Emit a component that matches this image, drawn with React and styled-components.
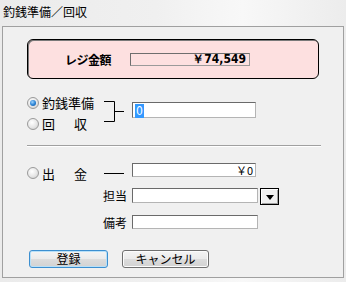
import styled, { createGlobalStyle } from "styled-components";

const GlobalStyle = createGlobalStyle`
  html, body {
    margin: 0;
    padding: 0;
  }
  body {
    width: 346px;
    height: 282px;
    overflow: hidden;
    background: #f0f0f0;
    font-family: "Noto Sans CJK JP", "DejaVu Sans", sans-serif;
    color: #000;
  }
`;

const Window = styled.div`
  width: 346px;
  height: 282px;
  display: flex;
  flex-direction: column;
  background: linear-gradient(90deg, #ebebeb 0%, #f0f0f0 45%, #f8f8f8 70%, #ececec 100%);
`;

const Title = styled.div`
  height: 26px;
  padding-left: 3px;
  font-size: 12px;
  line-height: 24px;
`;

const Panel = styled.div`
  box-sizing: border-box;
  width: 342px;
  height: 252px;
  margin-left: 2px;
  border: 1px solid #a0a0a0;
  background: #f0f0f0;
  display: flex;
  flex-direction: column;
`;

const PinkBox = styled.div`
  box-sizing: border-box;
  width: 292px;
  height: 40px;
  margin: 12px 0 0 24px;
  border: 1px solid #000;
  border-radius: 6px;
  box-shadow: inset 1px 1px 0 #7a7a7a;
  background: #fde0e0;
  display: flex;
  align-items: center;
  padding-left: 37px;
`;

const BoldLabel = styled.span`
  font-size: 12px;
  font-weight: bold;
  letter-spacing: -0.5px;
`;

const Display = styled.div`
  box-sizing: border-box;
  width: 120px;
  height: 13px;
  margin-left: 19px;
  border: 1px solid #9a9a9a;
  border-top-color: #6e6e6e;
  border-left-color: #6e6e6e;
  padding-right: 3px;
  text-align: right;
  font-family: "DejaVu Sans Condensed", "DejaVu Sans", sans-serif;
  font-stretch: condensed;
  font-weight: bold;
  font-size: 12px;
  line-height: 11px;
`;

const ChoiceSection = styled.div`
  display: flex;
  align-items: flex-start;
  margin: 13px 0 0 24px;
`;

const RadioList = styled.div`
  width: 77px;
  display: flex;
  flex-direction: column;
`;

const RadioRow = styled.label`
  height: 21px;
  display: flex;
  align-items: center;
  gap: 3px;
  font-size: 13px;
`;

const Radio = styled.span`
  box-sizing: border-box;
  flex-shrink: 0;
  width: 12px;
  height: 12px;
  border-radius: 50%;
  border: 1px solid #9a9a9a;
  background: radial-gradient(circle at 40% 35%, #ffffff 0%, #e6e6e6 55%, #c9c9c9 100%);
  display: flex;
  align-items: center;
  justify-content: center;
  &::after {
    content: "";
    display: ${(p) => (p.$checked ? "block" : "none")};
    width: 6px;
    height: 6px;
    border-radius: 50%;
    background: radial-gradient(circle at 40% 35%, #9fd4ff 0%, #2f86d6 50%, #0b4f9c 100%);
  }
`;

const Spaced = styled.span`
  letter-spacing: 3px;
  white-space: nowrap;
`;

const Bracket = styled.svg`
  display: block;
  flex-shrink: 0;
`;

const Field = styled.div`
  box-sizing: border-box;
  flex-shrink: 0;
  width: ${(p) => p.$w || 124}px;
  height: ${(p) => p.$h || 15}px;
  margin-top: ${(p) => p.$top || 0}px;
  margin-left: ${(p) => p.$left || 0}px;
  border: 1px solid #b4b4b4;
  border-top-color: #6a6a6a;
  border-left-color: #6a6a6a;
  background: #fff;
  font-size: 11px;
  line-height: ${(p) => (p.$h || 15) - 2}px;
  text-align: ${(p) => (p.$right ? "right" : "left")};
  padding: 0 2px;
`;

const Selected = styled.span`
  display: inline-block;
  background: #3399ff;
  color: #fff;
  padding: 0 1px;
  font-size: 12px;
  font-family: "DejaVu Sans Condensed", "DejaVu Sans", sans-serif;
`;

const Separator = styled.div`
  width: 294px;
  height: 1px;
  margin: 11px 0 0 24px;
  background: #a0a0a0;
  border-bottom: 1px solid #ffffff;
`;

const FormGrid = styled.div`
  display: grid;
  grid-template-columns: 72px 33px auto;
  margin: 16px 0 0 24px;
  font-size: 12px;
`;

const Cell = styled.div`
  display: flex;
  align-items: ${(p) => p.$align || "center"};
  justify-content: ${(p) => p.$justify || "flex-start"};
  height: ${(p) => p.$h || 0}px;
  margin-top: ${(p) => p.$top || 0}px;
  gap: ${(p) => p.$gap || 0}px;
  padding-right: ${(p) => p.$pr || 0}px;
  padding-left: ${(p) => p.$pl || 0}px;
`;

const Dash = styled.span`
  display: block;
  width: 20px;
  height: 1px;
  background: #000;
`;

const FieldLabel = styled.span`
  font-size: ${(p) => p.$size || 12}px;
  line-height: 15px;
  white-space: nowrap;
`;

const DropButton = styled.div`
  box-sizing: border-box;
  flex-shrink: 0;
  width: 19px;
  height: 17px;
  margin-left: 2px;
  border: 1px solid #000;
  box-shadow: inset 1px 1px 0 #fff, inset -1px -1px 0 #a0a0a0;
  background: #f0f0f0;
  display: flex;
  align-items: center;
  justify-content: center;
  &::after {
    content: "";
    border-left: 4px solid transparent;
    border-right: 4px solid transparent;
    border-top: 5px solid #000;
    margin-top: 1px;
  }
`;

const ButtonRow = styled.div`
  display: flex;
  gap: 14px;
  margin: 20px 0 0 26px;
`;

const Button = styled.button`
  box-sizing: border-box;
  width: ${(p) => p.$w}px;
  height: 18px;
  padding: 0;
  border: 1px solid ${(p) => (p.$focused ? "#3c8fd0" : "#707070")};
  border-radius: 3px;
  box-shadow: inset 0 0 0 1px ${(p) => (p.$focused ? "#b8e0f8" : "#fcfcfc")};
  background: linear-gradient(#f4f4f4 0%, #ebebeb 48%, #dcdcdc 52%, #d2d2d2 100%);
  font-family: "Noto Sans CJK JP", sans-serif;
  font-size: 12px;
  line-height: 14px;
  color: #000;
`;

export default function App() {
  return (
    <Window>
      <GlobalStyle />
      <Title>釣銭準備／回収</Title>
      <Panel>
        <PinkBox>
          <BoldLabel>レジ金額</BoldLabel>
          <Display>￥74,549</Display>
        </PinkBox>

        <ChoiceSection>
          <RadioList>
            <RadioRow>
              <Radio $checked />
              釣銭準備
            </RadioRow>
            <RadioRow>
              <Radio />
              <Spaced>回　収</Spaced>
            </RadioRow>
          </RadioList>
          <Bracket width="20" height="42" viewBox="0 0 20 42">
            <path d="M0 9.5H10.5V29.5H0M10.5 19.5H20" fill="none" stroke="#000" strokeWidth="1" />
          </Bracket>
          <Field $w={124} $h={16} $top={10} $left={8}>
            <Selected>0</Selected>
          </Field>
        </ChoiceSection>

        <Separator />

        <FormGrid>
          <Cell $h={20} $gap={3}>
            <Radio />
            <FieldLabel $size={13}>
              <Spaced>出　金</Spaced>
            </FieldLabel>
          </Cell>
          <Cell $h={20} $pl={5}>
            <Dash />
          </Cell>
          <Cell $h={20} $align="flex-start">
            <Field $w={124} $h={14} $right>
              ￥0
            </Field>
          </Cell>

          <Cell />
          <Cell $h={17} $top={5} $align="flex-start" $justify="flex-end" $pr={5}>
            <FieldLabel>担当</FieldLabel>
          </Cell>
          <Cell $h={17} $top={5} $align="flex-start">
            <Field $w={126} $h={15} />
            <DropButton />
          </Cell>

          <Cell />
          <Cell $h={15} $top={10} $align="flex-start" $justify="flex-end" $pr={5}>
            <FieldLabel>備考</FieldLabel>
          </Cell>
          <Cell $h={15} $top={10} $align="flex-start">
            <Field $w={126} $h={14} />
          </Cell>
        </FormGrid>

        <ButtonRow>
          <Button $w={79} $focused>
            登録
          </Button>
          <Button $w={87}>キャンセル</Button>
        </ButtonRow>
      </Panel>
    </Window>
  );
}
